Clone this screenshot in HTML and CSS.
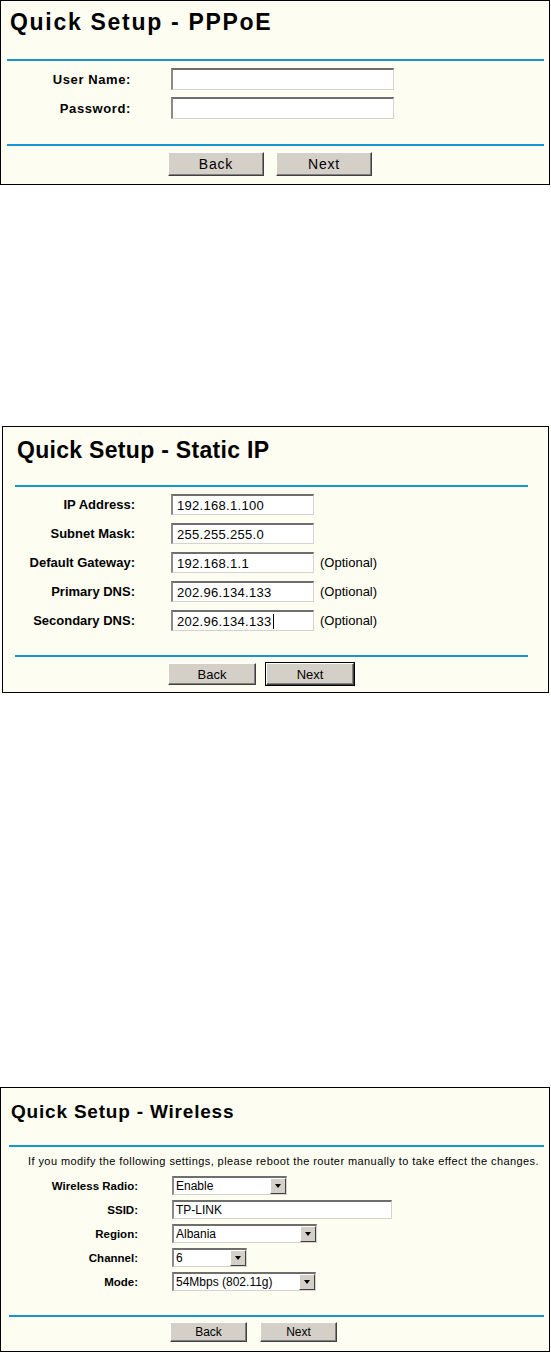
FILE: index.html
```html
<!DOCTYPE html>
<html>
<head>
<meta charset="utf-8">
<title>Quick Setup</title>
<link rel="stylesheet" href="styles.css">
</head>
<body>
<div class="page">

  <section class="panel p1">
    <h1 class="title">Quick Setup - PPPoE</h1>
    <div class="rule"></div>
    <div class="form">
      <label class="lbl">User Name:</label>
      <div class="field"><span class="input in-p1"></span></div>
      <label class="lbl">Password:</label>
      <div class="field"><span class="input in-p1"></span></div>
    </div>
    <div class="rule rule-b"></div>
    <div class="buttons">
      <span class="btn">Back</span>
      <span class="btn">Next</span>
    </div>
  </section>

  <section class="panel p2">
    <h1 class="title">Quick Setup - Static IP</h1>
    <div class="rule"></div>
    <div class="form">
      <label class="lbl">IP Address:</label>
      <div class="field"><span class="input in-p2">192.168.1.100</span></div>
      <label class="lbl">Subnet Mask:</label>
      <div class="field"><span class="input in-p2">255.255.255.0</span></div>
      <label class="lbl">Default Gateway:</label>
      <div class="field"><span class="input in-p2">192.168.1.1</span><span class="opt">(Optional)</span></div>
      <label class="lbl">Primary DNS:</label>
      <div class="field"><span class="input in-p2">202.96.134.133</span><span class="opt">(Optional)</span></div>
      <label class="lbl">Secondary DNS:</label>
      <div class="field"><span class="input in-p2">202.96.134.133<span class="caret"></span></span><span class="opt">(Optional)</span></div>
    </div>
    <div class="rule rule-b"></div>
    <div class="buttons">
      <span class="btn">Back</span>
      <span class="btn btn-default">Next</span>
    </div>
  </section>

  <section class="panel p3">
    <h1 class="title">Quick Setup - Wireless</h1>
    <div class="rule"></div>
    <p class="info">If you modify the following settings, please reboot the router manually to take effect the changes.</p>
    <div class="form">
      <label class="lbl">Wireless Radio:</label>
      <div class="field"><span class="select sel-radio"><span class="sel-text">Enable</span><span class="sel-btn"></span></span></div>
      <label class="lbl">SSID:</label>
      <div class="field"><span class="input in-ssid">TP-LINK</span></div>
      <label class="lbl">Region:</label>
      <div class="field"><span class="select sel-region"><span class="sel-text">Albania</span><span class="sel-btn"></span></span></div>
      <label class="lbl">Channel:</label>
      <div class="field"><span class="select sel-channel"><span class="sel-text">6</span><span class="sel-btn"></span></span></div>
      <label class="lbl">Mode:</label>
      <div class="field"><span class="select sel-mode"><span class="sel-text">54Mbps (802.11g)</span><span class="sel-btn"></span></span></div>
    </div>
    <div class="rule rule-b"></div>
    <div class="buttons">
      <span class="btn">Back</span>
      <span class="btn">Next</span>
    </div>
  </section>

</div>
</body>
</html>
```

FILE: styles.css
```css
html, body {
  margin: 0;
  padding: 0;
  background: #ffffff;
}

body {
  font-family: "Liberation Sans", Arial, sans-serif;
  color: #000;
}

.page {
  display: flex;
  flex-direction: column;
  align-items: flex-start;
}

.panel {
  background: #fdfdf2;
  border: 1px solid #000;
  box-sizing: border-box;
}

.title {
  margin: 0;
  font-weight: bold;
  white-space: nowrap;
}

.rule {
  height: 2px;
  background: #1597cf;
}

.form {
  display: grid;
  align-items: center;
}

.lbl {
  font-weight: bold;
  text-align: right;
  white-space: nowrap;
}

.field {
  display: flex;
  align-items: center;
}

.input {
  display: flex;
  align-items: center;
  box-sizing: border-box;
  background: #fff;
  border-style: solid;
  border-width: 2px 1px 1px 2px;
  border-color: #6e6e6e #d6d3ce #d6d3ce #8a8a8a;
  white-space: nowrap;
}

.caret {
  display: inline-block;
  width: 1px;
  height: 15px;
  background: #000;
  margin-left: 1px;
}

.opt {
  white-space: nowrap;
}

.buttons {
  display: flex;
}

.btn {
  display: flex;
  align-items: center;
  justify-content: center;
  box-sizing: border-box;
  background: #d4d0c8;
  border: 1px solid;
  border-color: #ffffff #404040 #404040 #ffffff;
  box-shadow: inset -1px -1px 0 #808080;
}

.btn-default {
  outline: 1px solid #000;
}

/* ---------- Panel 1: PPPoE ---------- */
.p1 {
  width: 550px;
  padding-bottom: 8px;
}

.p1 .title {
  padding: 9px 0 0 9px;
  font-size: 23px;
  line-height: 24px;
  letter-spacing: 1.7px;
}

.p1 .rule {
  margin: 25px 5px 0 6px;
}

.p1 .rule-b {
  margin-top: 25px;
}

.p1 .form {
  margin-top: 7px;
  grid-template-columns: 130px auto;
  column-gap: 40px;
  row-gap: 7px;
}

.p1 .lbl {
  font-size: 13px;
  letter-spacing: 0.6px;
}

.in-p1 {
  width: 223px;
  height: 22px;
}

.p1 .buttons {
  margin-top: 6px;
  padding-left: 167px;
  gap: 12px;
}

.p1 .btn {
  width: 96px;
  height: 24px;
  font-size: 14px;
  letter-spacing: 0.8px;
}

/* ---------- Panel 2: Static IP ---------- */
.p2 {
  width: 547px;
  margin-top: 241px;
  margin-left: 2px;
  padding-bottom: 7px;
}

.p2 .title {
  padding: 10px 0 0 14px;
  font-size: 23px;
  line-height: 26px;
  letter-spacing: 0.3px;
}

.p2 .rule {
  margin: 22px 20px 0 12px;
}

.p2 .rule-b {
  margin-top: 24px;
}

.p2 .form {
  margin-top: 7px;
  grid-template-columns: 132px auto;
  column-gap: 36px;
  row-gap: 8px;
}

.p2 .lbl {
  font-size: 13px;
}

.in-p2 {
  width: 143px;
  height: 21px;
  padding-left: 4px;
  font-size: 13px;
  letter-spacing: 0.3px;
}

.p2 .opt {
  margin-left: 6px;
  font-size: 13px;
}

.p2 .buttons {
  margin-top: 6px;
  padding-left: 165px;
  gap: 10px;
}

.p2 .btn {
  width: 88px;
  height: 22px;
  font-size: 13px;
}

/* ---------- Panel 3: Wireless ---------- */
.p3 {
  width: 550px;
  margin-top: 394px;
  padding-bottom: 9px;
}

.p3 .title {
  padding: 13px 0 0 10px;
  font-size: 19px;
  line-height: 22px;
  letter-spacing: 0.8px;
}

.p3 .rule {
  margin: 22px 5px 0 8px;
}

.p3 .rule-b {
  margin-top: 24px;
}

.info {
  margin: 7px 0 0 27px;
  font-size: 11px;
  line-height: 14px;
  letter-spacing: 0.42px;
  white-space: nowrap;
}

.p3 .form {
  margin-top: 8px;
  grid-template-columns: 137px auto;
  column-gap: 34px;
  row-gap: 5px;
}

.p3 .lbl {
  font-size: 11.5px;
}

.in-ssid {
  width: 220px;
  height: 19px;
  padding-left: 2px;
  font-size: 12px;
}

.select {
  display: flex;
  box-sizing: border-box;
  height: 19px;
  background: #fff;
  border-style: solid;
  border-width: 2px 1px 1px 2px;
  border-color: #6e6e6e #d6d3ce #d6d3ce #8a8a8a;
}

.sel-text {
  flex: 1;
  display: flex;
  align-items: center;
  padding-left: 2px;
  font-size: 12px;
  white-space: nowrap;
}

.sel-btn {
  width: 16px;
  box-sizing: border-box;
  background: #d4d0c8;
  border: 1px solid;
  border-color: #ffffff #404040 #404040 #ffffff;
  display: flex;
  align-items: center;
  justify-content: center;
}

.sel-btn::after {
  content: "";
  width: 0;
  height: 0;
  border-left: 3.5px solid transparent;
  border-right: 3.5px solid transparent;
  border-top: 4px solid #000;
}

.sel-radio { width: 115px; }
.sel-region { width: 145px; }
.sel-channel { width: 75px; }
.sel-mode { width: 144px; }

.p3 .buttons {
  margin-top: 5px;
  padding-left: 169px;
  gap: 13px;
}

.p3 .btn {
  width: 77px;
  height: 20px;
  font-size: 12px;
}
```
